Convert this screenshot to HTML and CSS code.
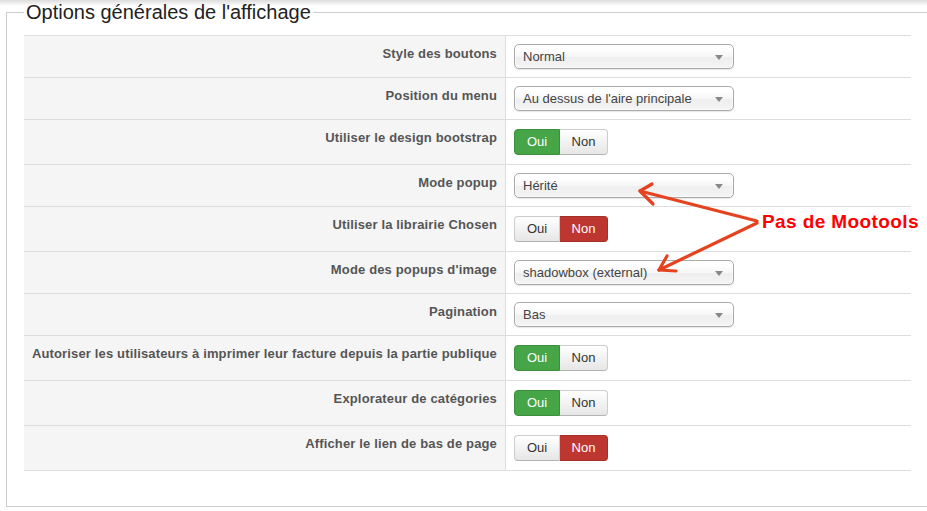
FILE: index.html
```html
<!DOCTYPE html>
<html lang="fr">
<head>
    <meta charset="UTF-8">
    <title>Options générales de l'affichage</title>
    <link rel="stylesheet" href="styles.css">
</head>
<body>
    <fieldset class="options">
        <legend>Options générales de l'affichage</legend>

        <div class="settings">
            <div class="row">
                <div class="label">Style des boutons</div>
                <div class="field"><div class="select">Normal</div></div>
            </div>
            <div class="row">
                <div class="label">Position du menu</div>
                <div class="field"><div class="select">Au dessus de l'aire principale</div></div>
            </div>
            <div class="row tall">
                <div class="label">Utiliser le design bootstrap</div>
                <div class="field">
                    <div class="toggle"><span class="yes on">Oui</span><span class="no">Non</span></div>
                </div>
            </div>
            <div class="row">
                <div class="label">Mode popup</div>
                <div class="field"><div class="select">Hérité</div></div>
            </div>
            <div class="row tall">
                <div class="label">Utiliser la librairie Chosen</div>
                <div class="field">
                    <div class="toggle"><span class="yes">Oui</span><span class="no on">Non</span></div>
                </div>
            </div>
            <div class="row">
                <div class="label">Mode des popups d'image</div>
                <div class="field"><div class="select">shadowbox (external)</div></div>
            </div>
            <div class="row">
                <div class="label">Pagination</div>
                <div class="field"><div class="select">Bas</div></div>
            </div>
            <div class="row tall">
                <div class="label">Autoriser les utilisateurs à imprimer leur facture depuis la partie publique</div>
                <div class="field">
                    <div class="toggle"><span class="yes on">Oui</span><span class="no">Non</span></div>
                </div>
            </div>
            <div class="row tall">
                <div class="label">Explorateur de catégories</div>
                <div class="field">
                    <div class="toggle"><span class="yes on">Oui</span><span class="no">Non</span></div>
                </div>
            </div>
            <div class="row tall">
                <div class="label">Afficher le lien de bas de page</div>
                <div class="field">
                    <div class="toggle"><span class="yes">Oui</span><span class="no on">Non</span></div>
                </div>
            </div>
        </div>
    </fieldset>

    <!-- annotation drawn over the screenshot -->
    <svg class="arrows" width="927" height="511" viewBox="0 0 927 511">
        <g fill="none" stroke="#e5431f" stroke-width="3.2" stroke-linecap="round" stroke-linejoin="round">
            <path d="M757 221 L640 191"/>
            <path d="M652 184 L640 191 L653 204"/>
            <path d="M757 223 L659 270"/>
            <path d="M667 256 L659 270 L676 271"/>
        </g>
    </svg>
    <div class="note">Pas de Mootools</div>
</body>
</html>
```

FILE: styles.css
```css
html, body {
    margin: 0;
    height: 100%;
}
body {
    font-family: "Liberation Sans", Arial, sans-serif;
    background: linear-gradient(#dcdcdc, #ffffff 6px);
    overflow: hidden;
    position: relative;
}
.options {
    margin: 0 0 0 6px;
    width: 960px;
    padding: 11px 17px 35px 17px;
    border: 1px solid #cccccc;
    box-sizing: border-box;
    height: 507px;
}
.options legend {
    font-size: 20px;
    line-height: 24px;
    color: #222;
    padding: 0 2px;
}
.settings {
    width: 887px;
    border-top: 1px solid #dddddd;
}
.row {
    display: grid;
    grid-template-columns: 482px 1fr;
    height: 41px;
    border-bottom: 1px solid #dddddd;
}
.row.tall {
    height: 44px;
}
.label {
    background: #f5f5f5;
    border-right: 1px solid #dddddd;
    text-align: right;
    padding: 9px 8px 0 0;
    font-size: 13px;
    line-height: 18px;
    font-weight: bold;
    letter-spacing: 0.15px;
    color: #555;
}
.field {
    padding: 8px 0 0 8px;
}
.row.tall .field {
    padding-top: 9px;
}
.select {
    position: relative;
    width: 220px;
    height: 25px;
    box-sizing: border-box;
    border: 1px solid #aaaaaa;
    border-radius: 5px;
    background: linear-gradient(#ffffff 20%, #f6f6f6 50%, #eeeeee 52%, #f4f4f4);
    box-shadow: 0 0 3px #ffffff inset, 0 1px 1px rgba(0, 0, 0, 0.1);
    padding-left: 8px;
    font-size: 13px;
    line-height: 23px;
    color: #444;
}
.select::after {
    content: "";
    position: absolute;
    right: 10px;
    top: 10px;
    border-left: 4px solid transparent;
    border-right: 4px solid transparent;
    border-top: 5px solid #888;
}
.toggle {
    display: flex;
    height: 26px;
}
.toggle span {
    box-sizing: border-box;
    height: 26px;
    font-size: 13px;
    line-height: 24px;
    text-align: center;
    color: #333;
    border: 1px solid #cccccc;
    border-bottom-color: #b3b3b3;
    background: linear-gradient(#ffffff, #e6e6e6);
}
.toggle .yes {
    width: 46px;
    border-radius: 4px 0 0 4px;
}
.toggle .no {
    width: 48px;
    border-left: none;
    border-radius: 0 4px 4px 0;
}
.toggle .yes.on {
    background: #46a546;
    border-color: #3d8f3d;
    color: #fff;
}
.toggle .no.on {
    background: #bd362f;
    border-color: #a4302a;
    color: #fff;
}
.arrows {
    position: absolute;
    left: 0;
    top: 0;
}
.note {
    position: absolute;
    left: 762px;
    top: 211px;
    font-size: 19px;
    line-height: 22px;
    font-weight: bold;
    letter-spacing: 0.4px;
    color: #ff0000;
}
```
